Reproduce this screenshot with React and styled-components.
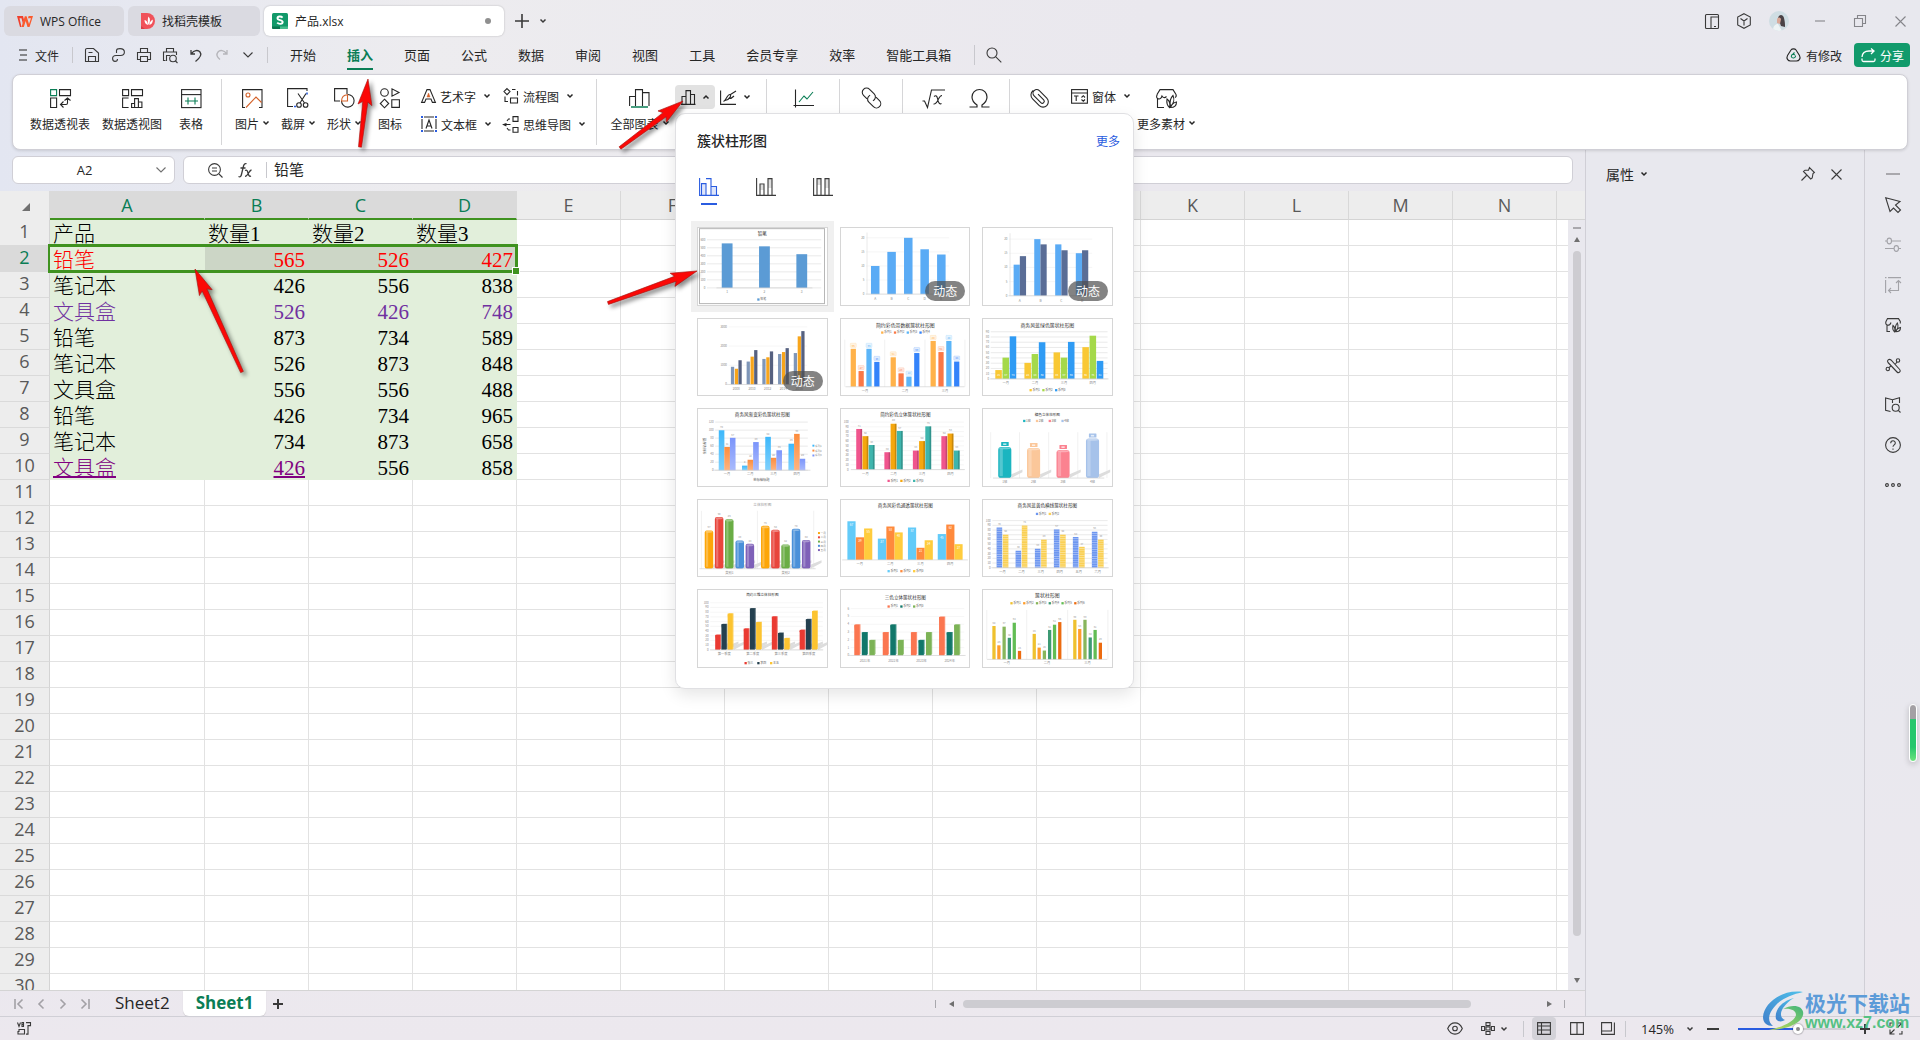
import React, { useState } from "react";
import styled, { createGlobalStyle, css } from "styled-components";

const SANS = `"Open Sans", "Noto Sans CJK SC", sans-serif`;
const CJK = `"Noto Sans CJK SC", sans-serif`;
const SONG = `"Liberation Serif", "Noto Sans CJK SC", serif`;
const GREEN = "#0a7d55";
const LINE = "#d0cfd6";

const GlobalStyle = createGlobalStyle`
  * { box-sizing: border-box; }
  html, body { margin: 0; padding: 0; }
  body { font-family: ${CJK}; font-size: 12px; color: #262626; overflow: hidden; }
  button, input { font: inherit; color: inherit; }
  button { background: none; border: 0; padding: 0; margin: 0; }
`;

/* ---------- icons ---------- */

const Svg = styled.svg`
  display: block;
  flex: none;
  fill: none;
  stroke: currentColor;
  stroke-width: 1.1;
  overflow: visible;
`;

const O = "#d4622a";
const B = "#2a5ce0";

const ICONS = {
  wps: [16, 13, <g stroke="none"><path fill="#f0402c" d="M0 1h6l1 4-1 4L4.500 3.200H2.500L4.500 12H3L0 1z" /><path fill="#fb5a2d" d="M4.500 12 7.800 1.200h1.800L12 9l2-5.800h-3L11.600 1H16l-3.500 11h-2L8.700 6 6.800 12z" /></g>],
  docer: [14, 16, <g stroke="none"><path fill="#f0525a" d="M0 0h6a8 8 0 0 1 8 8 8 8 0 0 1-8 8H0z" /><path fill="#d93c45" d="M0 13l4 3H0z" /><path fill="#fff" d="M7.500 3.500c2 2 2 5 0 8.500-1-3-1-6 0-8.500zM3.500 7c2 .5 3.300 2 3.500 5-2.500-.5-3.500-2.500-3.500-5zM11.800 6.500c.2 3-1 5-3.500 5.500.2-2.500 1.500-4.500 3.500-5.500z" /></g>],
  sheet: [16, 16, <g stroke="none"><rect width="16" height="16" rx="1.500" fill="#12996a" /><path fill="#0b7650" d="M0 13.500h8V16H1.500A1.500 1.500 0 0 1 0 14.500z" /><path fill="#46bd8d" d="M8 13.500h8v1a1.500 1.500 0 0 1-1.500 1.500H8z" /><path stroke="#fff" strokeWidth="1.900" fill="none" d="M10.600 4.600C9 3 5.500 3.200 5.500 5.200c0 2.400 5.200 1.400 5.200 3.900 0 2.200-3.900 2.300-5.500.6" /></g>],
  plus: [14, 14, <path strokeWidth="1.600" d="M7 0v14M0 7h14" />],
  plusSmall: [10, 10, <path strokeWidth="2" d="M5 0v10M0 5h10" />],
  chev: [6, 4, <path strokeWidth="1.500" d="M.5.5 3 3 5.500.5" />],
  chevUp: [6, 4, <path strokeWidth="1.500" d="M.5 3.500 3 1l2.500 2.500" />],
  chevWide: [10, 6, <path d="M.5.500 5 5 9.500.5" />],
  burger: [8, 12, <path d="M0 1h8M1 6h7M0 11h8" />],
  save: [14, 14, <path d="M13.500 13.500H.5V2A1.500 1.500 0 0 1 2 .5h6.500l5 4.500v8.500zM3.500 13.500V8.500h7v5M3.500 4.500h4" />],
  link: [13, 14, <path d="M4.500 5V2.500C4.500 1.200 6 .6 8 .6c3 0 4.400 1.300 4.400 3.500S11 7.500 8.500 7.500H4C1.800 7.500.6 8.800.6 10.500s1 2.900 2.400 2.900S5.500 12.500 5.500 11" />],
  print: [14, 14, <path d="M3.500 4.500v-4h7v4M3.500 11.500h-3v-7h13v7h-3M3.500 8.500h7v5h-7z" />],
  preview: [15, 15, <><path d="M3.500 4V.5h7V4M2.500 12.500h-2V4h13v3M3.500 13V7.500H7" /><circle cx="10" cy="10.500" r="3.300" /><path d="m12.500 13 2 2" /></>],
  undo: [12, 13, <path strokeWidth="1.300" d="M1 1v4h4M1.500 4.500C4 1.200 8 .5 10 3s.5 5.500-4.500 9.500" />],
  redo: [12, 13, <path strokeWidth="1.300" d="M11 1v4H7M10.500 4.500C8 1.200 4 .5 2 3s-.5 5.500 2 7.500" />],
  search: [16, 16, <><circle cx="6" cy="6" r="5" /><path d="m9.800 9.800 5.500 5.500" /></>],
  cloud: [15, 14, <><path d="M5 2C6 .5 9 .5 10 2l3.500 5.500c1.500 3-.5 5.500-3 5.500h-6C2 13 0 10.500 1.500 7.500z" /><path stroke={GREEN} d="M8.500 4.500 7 6l2 1M9.500 7.500c.5 3-4 3.300-4.200.8 0-1.300.8-2 2-2.200" /></>],
  share: [15, 14, <path strokeWidth="1.300" d="M1 9c.3-3.800 3-6 7-6h5M10 .5 13 3l-3 3M1 10.500v1.500c0 1 .5 1.500 1.500 1.500h10c1 0 1.500-.5 1.500-1.500v-1.500" />],
  panes: [14, 15, <><rect x=".5" y=".5" width="13" height="14" rx="1" /><path d="M6 14.500V3h7.500M9 12.500h2" /></>],
  cube: [14, 16, <path d="M7 .7 13.300 4v8L7 15.300.7 12V4zM3.500 5.500 7 8l3.500-2.500M7 8v4.500" />],
  min: [10, 2, <path d="M0 1h10" />],
  restore: [12, 12, <path d="M.5 3.500h8v8h-8zM3.500 3.500v-3h8v8h-3" />],
  close: [11, 11, <path d="m.5.500 10 10M10.500.5l-10 10" />],
  pivot: [21, 19, <><path stroke={GREEN} d="M.6.6h6v6h-6z" /><path d="M9.500.6h11v6h-11zM.6 9h6v9.500h-6zM17.500 9.500V14c0 1-.5 1.500-1.500 1.500h-5.500M14.500 11.500l3-2.500 3 2.500M13.500 12.500l-3 3 3 3" /></>],
  pivotChart: [21, 19, <path d="M.6.600h6v6h-6zM9.500.6h11v6h-11zM6.600 18.500h-6V9h6M9 18.500h11.500M9.600 18.500v-4h3v4M12.600 18.500V9.600h3.800v8.900M16.400 18.500v-5.500h3.500v5.500" />],
  table: [21, 19, <><rect x=".6" y=".6" width="19.400" height="18" /><path d="M.6 5.600H20" /><path stroke={GREEN} d="M4 12h13M7 8.500v7M14 8.500v7" /></>],
  picture: [21, 19, <><path d="M3 18.500H.6V.6H20v17.900h-3" /><circle cx="6" cy="6" r="2" stroke={O} /><path stroke={O} d="M4 18.500 14 8l5.500 5.500" /></>],
  shot: [22, 20, <><path d="M6 18.500H.6V.6H20V3" /><path stroke={B} strokeWidth="1.600" d="M7 18.500h2M20 4.500v2" /><path d="m11 5.500 6.500 9.500M19 5.500 13 15" /><circle cx="12" cy="17" r="2.300" /><circle cx="18.600" cy="17" r="2.300" /></>],
  shape: [21, 20, <><path d="M6 13H.6V.6H13V6" /><path d="M13.500 6.500a6.300 6.300 0 1 1-6 6.500" /><path stroke={O} d="M7.500 13c.2-3.500 2.500-6 6-6.200V13z" /></>],
  icons: [20, 20, <><circle cx="4.500" cy="4.500" r="3.800" /><path d="M12 .8v7.400l7-3.700zM4.500 11.200 8.700 15.500 4.500 19.800.3 15.500zM11.800 11.800h7.600v7.600h-7.600z" /></>],
  wordArt: [15, 14, <><path d="M6 .6h3L14.400 13.400h-3L10 10H5l-1.400 3.400h-3z" /><path fill={O} stroke={O} strokeWidth=".5" d="M7.500 4 9 8H6z" /></>],
  textBox: [16, 16, <><path d="M3 1h10M3 15h10M1 3v10M15 3v10M5 12.500 8 4l3 8.500M6 10h4" /><g fill={B} stroke="none"><path d="M0 0h2v2H0zM14 0h2v2h-2zM0 14h2v2H0zM14 14h2v2h-2z" /></g></>],
  flow: [16, 16, <path d="M4 .6 7 3.600 4 6.600 1 3.600zM2 8.500v5h3M9 1.500h3.500M14.500 3v4.500M7.500 10h7v5h-7z" />],
  mind: [16, 17, <path d="M10 .6h5v4.800h-5zM10 11.500h5v4.800h-5zM7 3H5.500L4 5M3.500 7.500l-3 1 3 1.500M.5 8.500h7M4 12l1.500 2H7.500" />],
  bars: [21, 19, <><path d="M.6 17V7.500h5.500M6.500 17V.6h7V17M13.500 3.600H20V17" /><path stroke={GREEN} strokeWidth="1.500" d="M2 18h17" /></>],
  barsSmall: [15, 15, <path d="M0 14.400h14.500M1 14V6.500h4M5 14V.6h4.500V14M9.500 4.500h4V14" />],
  scatter: [17, 15, <path d="M.6.500v13.900H16M3.500 11.500C6 10.500 7 4.500 10 4.500c1.500 0 .5 5-5 6M9 8.500c2 .5 3.500-1 5-2.500M10.500 4.500 16 1" />],
  spark: [21, 19, <><path d="M2.500.500v18M.5 16.500H21" /><path stroke={GREEN} d="m6 13 5-6 3 3 6-7" /></>],
  chain: [21, 20, <g transform="rotate(45 10.500 10)"><path d="M8 13.800H3a4.300 4.300 0 0 1 0-8.600h6.500a4.300 4.300 0 0 1 4 5.800" /><path d="M13 6.200h5a4.300 4.300 0 0 1 0 8.600h-6.500a4.300 4.300 0 0 1-4-5.800" /></g>],
  sqrt: [23, 19, <path d="M.5 12h2l3 6.500L9.500 1H23M12 7.500c2-1.500 3-.5 3.500 2s1.500 6.500 4 5M20 6.500c-2 0-2.500 1.500-4 4.500s-2.500 4.500-4.500 4" />],
  omega: [21, 19, <path strokeWidth="1.200" d="M.5 18H8v-2C5 14 3 11.500 3 8a7.500 7.500 0 0 1 15 0c0 3.500-2 6-5 8v2h7.500" />],
  clip: [20, 19, <g transform="rotate(45 10 9.500)"><path d="M-.5 8.500V9a5.500 5.500 0 0 0 5.500 6h9.500a5.300 5.300 0 0 0 0-10.600H4a3.600 3.600 0 0 0 0 7.400h9.500a2 2 0 0 0 0-4H5.500" /></g>],
  form: [17, 15, <><rect x=".6" y=".6" width="15.800" height="13.600" /><path d="M.6 4h15.800M3 7h4.500M5.200 7v5M10.500 8.500 12.300 6.700l1.700 1.800M10.500 10.500l1.800 1.700 1.700-1.700" /></>],
  more: [21, 19, <path d="M8 18.500H1.500V9.500C0 8.500.6 6 1.600 5.500M1.600 9.500c2.500 1.500 4-1 4.400-2.500 1 1.500 2.500 2.500 4.500.5M1 5.500 4 .6h13l3 4.900c.4 1 0 2.500-1 3M13.500 18.500C10.500 16 10.500 13 11 10c2.500 2 3.500 5 2.500 8.500zM14.500 17C13.500 13 14.500 9 17 6.500c1.500 3.500 1 8-2.500 10.500zM14.500 18.500c1-3 3-5 6-5.500 0 3.500-2.500 5.500-6 5.500z" />],
  material: [16, 15, <path d="M5 13.500H2V7C.5 6.500.6 4.500 1 3.500L2.500.6h11L15.300 3.500v2M2 7c2 .5 3.500-.5 4-2.500M9.500 13.800C7.500 12 7.500 9.500 8 7.500c1.800 1.500 2.300 4 1.500 6.300zM10.500 13C10 10 10.500 7 12.300 5c1.200 2.500.7 6-1.800 8zM10.800 13.800c.7-2.300 2.200-3.800 4.700-4.300 0 2.600-1.800 4.300-4.700 4.300z" />],
  zoomOut: [15, 15, <><circle cx="6.500" cy="6.500" r="5.900" /><path d="m11 11 3.500 3.500M4 5h5M4 8h5" /></>],
  fx: [14, 15, <path strokeWidth="1.300" d="M.5 13.500c2 1 2.700-.5 3.200-3L5.500 3c.5-2 1.500-2.800 3-2.300M2.500 5h5M7 7.500c2-1 2.500.5 3 2.500s1.300 4 3 3M13.500 7c-2.500 0-3.500 6.500-6.500 6.300" />],
  pin: [14, 14, <path d="M8.500.6 13.400 5.500 12 6.500l-.8 4.500-1.500 1L2.500 4.500 4 3.300l3.500-.2zM5.500 8.500.5 13.500" />],
  cursor: [16, 16, <path d="M.7.7 15 4.500 10.500 8l5 5-2.500 2.500-4.500-4.500L5 14.500z" />],
  tune: [16, 14, <><path d="M0 3h2M6.500 3H16M0 10.500h9M13.500 10.500H16" /><ellipse cx="4.300" cy="3" rx="2.200" ry="2.900" /><ellipse cx="11.300" cy="10.500" rx="2.200" ry="2.900" /></>],
  resize: [16, 16, <path d="M0 .6h1.500M3 .6h13M.6 3v13M13.500 4v9.500H4M11 6l2.500-2.500L16 6M6 11l-2.500 2.500L6 16" />],
  tools: [16, 15, <><path d="M3 4.500 12 14a1.800 1.800 0 0 0 2.700-2.500L6 2C4 .5 1.500 2.500 3 4.500zM10.500 6l1.500-2M4 9.500 6 8" /><circle cx="13" cy="2.500" r="1.700" /><circle cx="2.800" cy="11" r="1.700" /></>],
  book: [16, 16, <><path d="M5.500 14.500.6 13.300V1l6.900 1.800L14.500.700V6M7.500 2.800V6" /><circle cx="10.700" cy="10.700" r="3.500" /><path d="m13.300 13.300 2.200 2.200" /></>],
  help: [16, 16, <><circle cx="8" cy="8" r="7.400" /><path d="M5.700 6.200C5.800 3 10.300 3 10.300 6c0 1.800-2.300 1.900-2.300 3.800M8 11.500v1.300" /></>],
  dots: [16, 4, <><circle cx="2" cy="2" r="1.400" /><circle cx="8" cy="2" r="1.400" /><circle cx="14" cy="2" r="1.400" /></>],
  first: [10, 10, <path strokeWidth="1.600" d="M1 0v10M8.500.500 4 5l4.500 4.500" />],
  last: [10, 10, <path strokeWidth="1.600" d="M9 0v10M1.500.500 6 5 1.500 9.500" />],
  prev: [6, 10, <path strokeWidth="1.600" d="M5.500.500 1 5l4.500 4.500" />],
  next: [6, 10, <path strokeWidth="1.600" d="M.5.500 5 5 .5 9.500" />],
  macro: [14, 13, <path d="M.5.500 2 4.500 3.500.5M5 .5h1.500v4H5zM5 2.500h1.500M9 .6h4.500v3H11v8.500H9M2 7.500h5.500v4.500H1V9.500h1z" />],
  eye: [16, 13, <><path d="M.7 6.500C4-1 12-1 15.300 6.500 12 14 4 14 .7 6.500z" /><circle cx="8" cy="6.500" r="2.300" /></>],
  cross: [14, 13, <path d="M5 .6h4v3H5zM5 9.500h4v3H5zM.6 4.500h3v4h-3zM10.400 4.500h3v4h-3zM5 5h4v3H5z" />],
  gridView: [14, 13, <path d="M.6.600h12.800v11.800H.6zM.6 4h12.800M.6 8h12.800M4.500.6v11.800" />],
  columns: [14, 13, <path d="M.6.600h12.800v11.800H.6zM7 .6v11.800" />],
  page: [14, 13, <path d="M.6.600h9.900v8.400H.6zM13.400.6v11.800H.6V9" />],
  minus: [12, 2, <path strokeWidth="2" d="M0 1h12" />],
  full: [14, 13, <path d="M8.500 1H13v4.500M13 1 8.500 5.500M5.500 12H1V7.500M1 12l4.500-4.500M1 4V1h3M13 9v3h-3" />],
  cluster: [20, 18, <><path fill="#dfe6fb" d="M2 6h5v11H2zM12.500 9H18v8h-5.500z" stroke="none" /><path d="M.6 0v17.400H20M2.500 17V5.600H7V17M7 .6h5V17M12.500 8.500h5V17" /></>],
  stacked: [20, 18, <><path fill="#dedede" stroke="none" d="M4 7h4v5H4zM12 1h4v9h-4z" /><path d="M.6 0v17.400H20M4 17V6h4v11M12 17V.6h4V17" /></>],
  percent: [20, 18, <><path fill="#dedede" stroke="none" d="M4 1h4v6H4zM12 1h4v9h-4z" /><path d="M.6 0v17.400H20M4 17V.6h4V17M12 17V.6h4V17" /></>],
};

const Icon = ({ name }) => {
  const [w, h, body] = ICONS[name];
  return (
    <Svg width={w} height={h} viewBox={`0 0 ${w} ${h}`} aria-hidden="true">
      {body}
    </Svg>
  );
};

/* ---------- frame ---------- */

const Frame = styled.div`
  position: relative;
  display: flex;
  flex-direction: column;
  height: 100vh;
  overflow: hidden;
  background:
    linear-gradient(180deg, rgba(236, 232, 238, 0) 60%, #ece8ee 100%),
    linear-gradient(90deg, #e3e6f1 0, #edecef 22%, #eae8ee 60%, #e8e8ee 100%);
`;

const Row = styled.div`
  display: flex;
  align-items: center;
`;

const TitleBar = styled(Row)`
  height: 40px;
  padding: 6px 0 4px 4px;
  gap: 4px;
`;

const FileTab = styled.button`
  display: flex;
  align-items: center;
  gap: 7px;
  width: ${(p) => p.$w}px;
  height: 30px;
  padding: 0 13px;
  border-radius: 6px;
  font-family: ${SANS};
  background: ${(p) => (p.$active ? "#fff" : "#dadae1")};
  box-shadow: ${(p) => (p.$active ? "0 0 2px rgba(0,0,0,.25)" : "none")};
  &[aria-selected="true"] { padding-left: 8px; }
`;

const Dot = styled.span`
  width: 6px;
  height: 6px;
  margin-left: auto;
  border-radius: 50%;
  background: #8f8f8f;
`;

const IconButton = styled.button`
  display: flex;
  align-items: center;
  justify-content: center;
  gap: 6px;
  width: ${(p) => p.$w || 26}px;
  height: ${(p) => p.$h || 24}px;
  border-radius: 4px;
  color: ${(p) => p.$c || "#3a3a3a"};
  background: ${(p) => (p.$on ? "#d3d2d8" : "none")};
`;

const Push = styled(Row)`
  margin-left: auto;
`;

const Avatar = styled.span`
  width: 20px;
  height: 20px;
  margin: 0 11px 0 9px;
  border-radius: 50%;
  overflow: hidden;
  background: #cfdde3;
`;

const MenuBar = styled(Row)`
  height: 34px;
  padding: 0 10px 4px 19px;
`;

const FileMenu = styled.button`
  display: flex;
  align-items: center;
  gap: 8px;
  margin-right: 13px;
`;

const QuickTools = styled(Row)`
  padding: 0 6px;
`;

const VLine = styled.span`
  flex: none;
  width: 1px;
  height: ${(p) => p.$h || 16}px;
  margin: 0 ${(p) => p.$m || 0}px;
  background: ${(p) => p.$c || "#c8c8cd"};
`;

const Gap = styled.span`
  flex: none;
  width: ${(p) => p.$w || 8}px;
  height: ${(p) => p.$h || 1}px;
`;

const MenuTabs = styled.nav`
  display: flex;
  gap: 31px;
  margin: 0 23px 0 22px;
`;

const MenuTab = styled.button`
  height: 28px;
  margin-top: 2px;
  padding-bottom: 2px;
  font-size: 13px;
  white-space: nowrap;
  border-bottom: 2px solid transparent;
  ${(p) => p.$active && css`color: ${GREEN}; font-weight: 700; border-color: ${GREEN};`}
`;

const ShareButton = styled.button`
  display: flex;
  align-items: center;
  gap: 4px;
  height: 24px;
  margin-left: 12px;
  padding: 0 6px 0 7px;
  border-radius: 4px;
  color: #fff;
  background: #119a6b;
`;

/* ---------- ribbon ---------- */

const Ribbon = styled.div`
  position: relative;
  z-index: 2;
  display: flex;
  align-items: flex-start;
  height: 76px;
  margin: 0 12px;
  padding: 4px 11px;
  border: 1px solid ${LINE};
  border-radius: 8px;
  background: #fff;
  box-shadow: 0 1px 3px rgba(0, 0, 0, 0.12);
`;

const BigTool = styled.button`
  display: flex;
  flex-direction: column;
  align-items: center;
  flex: none;
  width: ${(p) => p.$w}px;
  padding-top: 9px;
`;

const BigIcon = styled.span`
  display: flex;
  align-items: center;
  height: 20px;
`;

const ToolLabel = styled.span`
  display: flex;
  align-items: center;
  gap: 4px;
  height: 20px;
  margin-top: 5px;
  white-space: nowrap;
`;

const ToolStack = styled.div`
  display: flex;
  flex-direction: column;
  gap: 4px;
  width: ${(p) => p.$w}px;
  margin-left: ${(p) => p.$ml || 0}px;
  padding-top: ${(p) => (p.$ml ? 5 : 6)}px;
`;

const SmallTool = styled.button`
  display: flex;
  align-items: center;
  height: 24px;
  gap: 4px;
  white-space: nowrap;
  & > span { margin-right: 4px; }
`;

const PopAnchor = styled.div`
  position: relative;
  padding-top: 6px;
`;

const DropButton = styled.button`
  display: flex;
  align-items: center;
  justify-content: center;
  gap: 7px;
  width: 40px;
  height: 24px;
  border-radius: 4px;
  background: ${(p) => (p.$on ? "#e2e2e2" : "none")};
`;

const Pop = styled.section`
  position: absolute;
  left: 0;
  top: 34px;
  width: 459px;
  padding: 15px 20px 20px 21px;
  border: 1px solid #e0e0e3;
  border-radius: 10px;
  background: #fff;
  box-shadow: 0 6px 16px rgba(0, 0, 0, 0.1);
`;

const PopHead = styled.header`
  display: flex;
  align-items: center;
  justify-content: space-between;
  height: 22px;
`;

const PopTitle = styled.h2`
  margin: 0;
  font-size: 14px;
  font-weight: 500;
`;

const MoreLink = styled.a`
  margin-right: -7px;
  color: #2a5ce0;
  text-decoration: none;
`;

const Kinds = styled.div`
  display: flex;
  gap: 37px;
  margin: 27px 0 22px 2px;
`;

const Kind = styled.button`
  display: flex;
  flex-direction: column;
  align-items: center;
  gap: 7px;
  width: 20px;
  color: ${(p) => (p.$on ? "#2a5ce0" : "#3a3a3a")};
  &::after {
    content: "";
    width: 16px;
    height: 2px;
    background: ${(p) => (p.$on ? "#2a5ce0" : "transparent")};
  }
`;

const Thumbs = styled.div`
  display: grid;
  grid-template-columns: repeat(3, 1fr);
  grid-template-rows: repeat(5, minmax(0, 1fr));
  gap: 12px;
  height: 441px;
`;

const Thumb = styled.button`
  position: relative;
  border: 1px solid #d6d6d6;
  background: #fff;
  box-shadow: ${(p) => (p.$on ? "0 0 0 6px #f0f0f0" : "none")};
  & > svg { display: block; width: 100%; height: 100%; }
`;

const Badge = styled.span`
  position: absolute;
  right: 4px;
  bottom: 4px;
  width: 40px;
  border-radius: 10px;
  line-height: 20px;
  color: #fff;
  background: rgba(78, 78, 78, 0.7);
`;

/* ---------- thumbnails ---------- */

const MONTHS = ["一月", "二月", "三月", "四月", "五月", "六月"];
const series = (n) => Array.from({ length: n }, (_, i) => `系列${i + 1}`);
const steps = (max, by) => Array.from({ length: max / by + 1 }, (_, i) => max - i * by);

const CHARTS = [
  { view: [52, 52], title: "铅笔", ts: 14, ty: 67, starts: [123, 237, 351], off: [0], w: 33, base: 235, tops: [[99], [108], [132]], colors: ["#5b9bd5"], yl: steps(600, 100), gy: 88, gx: [78, 427], xl: ["1", "2", "3"], xy: 246, legend: ["铅笔"], ly: 270, frame: true },
  { view: [481, 52], live: true, starts: [571, 621, 672, 722, 773], off: [0], w: 26, base: 254, tops: [[168], [125], [82], [117], [133]], colors: ["#5aabf5"], yl: steps(20, 5), gy: 82, gx: [556, 810], faint: true, axis: 66, xl: [..."ABCDE"], xy: 267 },
  { view: [908, 52], live: true, starts: [1000, 1063, 1127, 1190], off: [0, 19], w: 19, base: 259, tops: [[164, 138], [86, 102], [102, 120], [129, 120]], colors: ["#5aabf5", "#5a6d96"], yl: steps(20, 5), gy: 86, gx: [986, 1240], faint: true, axis: 68, xl: [..."ABCD"], xy: 272 },
  { view: [52, 325], live: true, starts: [151, 199, 247, 295, 343], off: [0, 12, 23], w: 10, base: 525, tops: [[471, 477, 451], [455, 440, 420], [447, 442, 424], [432, 426, 414], [429, 378, 362]], colors: ["#7f96b8", "#f8a51b", "#566180"], yl: steps(3000, 1000), gy: 349, gx: [144, 384], faint: true, xl: ["2008", "2010", "2012", "2014", "2016"], xy: 538 },
  { view: [481, 325], title: "简约彩色带数据簇状柱形图", ts: 15, ty: 341, starts: [509, 631, 753], off: [0, 24, 48, 72], w: 16, base: 532, tops: [[416, 484, 416, 456], [442, 491, 501, 429], [392, 426, 392, 455]], colors: ["#ffb24a", "#fa7846", "#5bb5f8", "#3483fa"], vals: true, boxed: true, dividers: [491, 613, 736, 858], dy: 388, xl: MONTHS, xy: 543, legend: series(4), ly: 366 },
  { view: [908, 325], title: "商务风蓝绿色簇状柱形图", ts: 15, ty: 341, starts: [944, 1033, 1122, 1210], off: [0, 22, 44], w: 20, base: 508, tops: [[481, 443, 378], [459, 432, 396], [427, 443, 395], [411, 376, 453]], colors: ["#f9c834", "#a5d94a", "#2f9bf4"], inner: 496, yl: steps(90, 10), gy: 364, gx: [930, 1287], xl: MONTHS, xy: 520, legend: series(3), ly: 542 },
  { view: [52, 25], title: "商务风渐变彩色簇状柱形图", ts: 14, ty: 41, starts: [114, 185, 256, 327], off: [0, 17, 34], w: 17, base: 212, tops: [[90, 141, 113], [198, 180, 126], [110, 174, 151], [131, 101, 177]], colors: ["#3db8fb", "#fd8c3c", "#7b95fb"], soft: true, vals: true, yl: steps(120, 20), gy: 65, gx: [103, 386], xl: MONTHS, xy: 223, side: ["系列1", "系列2", "系列3"], sx: 400, sy: 137, sp: 15, caption: ["坐标轴标题", 244, 240], vcaption: ["坐标轴标题", 71, 138] },
  { view: [481, 25], title: "简约彩色立体簇状柱形图", ts: 14, ty: 41, starts: [526, 612, 699, 786], off: [0, 19, 38], w: 18, base: 210, tops: [[86, 108, 135], [157, 70, 92], [152, 123, 78], [108, 100, 152]], colors: ["#f0558d", "#f5a70e", "#3eb5ad"], shade: true, vals: true, yl: steps(100, 10), gy: 65, gx: [508, 855], faint: true, xl: MONTHS, xy: 222, legend: series(3), ly: 244 },
  { view: [908, 25], title: "糖色立体柱形图", ts: 11, ty: 41, starts: [953, 1041, 1131, 1221], off: [0], w: 40, base: 236, tops: [[141], [144], [150], [115]], colors: ["#1bb5c0", "#fbc79a", "#fb8290", "#a6c2ea"], bottle: true, shadow: true, dividers: [930, 1018, 1107, 1196, 1285], dy: 96, xl: ["1班", "2班", "3班", "4班"], xy: 246, legend: ["1班", "2班", "3班", "4班"], ly: 61 },
  { view: [52, 298], title: "立体柱形图", ts: 11, ty: 313, tc: "#999", starts: [71, 243], off: [0, 31, 62, 94, 125], w: 26, base: 508, tops: [[391, 350, 357, 422, 432], [377, 389, 434, 386, 420]], colors: ["#fda608", "#e8453c", "#6aad45", "#4a90d9", "#7e60b8"], round: true, shadow: true, vals: true, dividers: [61, 232, 404], dy: 331, xl: ["类别1", "类别2"], xy: 520, side: ["一月", "二月", "三月", "四月", "五月"], sx: 417, sy: 399, sp: 13 },
  { view: [481, 298], title: "商务风彩色通透簇状柱形图", ts: 14, ty: 314, starts: [499, 592, 684, 775], off: [0, 26, 51], w: 25, base: 481, tops: [[363, 412, 385], [416, 379, 397], [382, 444, 421], [402, 373, 433]], colors: ["#63cbf9", "#ff8a3c", "#ffcc3d"], innerTop: true, xl: MONTHS, xy: 492, legend: series(3), ly: 515 },
  { view: [908, 298], title: "商务风蓝黄色横线簇状柱形图", ts: 14, ty: 314, starts: [948, 1006, 1065, 1123, 1181, 1239], off: [0, 19], w: 17, base: 505, tops: [[382, 404], [453, 376], [447, 419], [388, 404], [411, 441], [395, 419]], colors: ["#6d96f0", "#fad054"], stripes: true, vals: true, yl: steps(100, 10), gy: 361, gx: [935, 1287], xl: MONTHS, xy: 517, legend: series(2), ly: 340 },
  { view: [52, 569], title: "简约三维立体柱形图", ts: 11, ty: 583, starts: [103, 190, 276, 361], off: [0, 19, 38], w: 18, base: 752, tops: [[706, 673, 641], [687, 625, 667], [650, 700, 716], [691, 658, 633]], colors: ["#ea3a32", "#24404f", "#fcc431"], cap: true, shadow: true, yl: steps(100, 10), gy: 608, gx: [88, 432], faint: true, xl: ["第一季度", "第二季度", "第三季度", "第四季度"], xy: 764, legend: ["张三", "李四", "王五"], ly: 792 },
  { view: [481, 569], title: "三色立体簇状柱形图", ts: 14, ty: 591, starts: [520, 607, 693, 779], off: [0, 23, 46], w: 19, base: 769, tops: [[675, 698, 722], [698, 675, 722], [698, 722, 698], [651, 698, 675]], colors: ["#fb7650", "#11776a", "#7cb356"], cap: true, yl: steps(6, 1), gy: 626, gx: [509, 856], faint: true, xl: ["2021年", "2022年", "2023年", "2024年"], xy: 785, legend: series(3), ly: 619 },
  { view: [908, 569], title: "簇状柱形图", ts: 15, ty: 584, starts: [935, 1058, 1182], off: [0, 15, 31, 47, 62, 78], w: 10, base: 781, tops: [[679, 738, 681, 715, 669, 755], [703, 745, 754, 691, 675, 667], [660, 688, 660, 714, 691, 730]], colors: ["#efc12e", "#ff9d2b", "#88b65c", "#3d9a73", "#62bd54", "#ec6b10"], vals: true, dividers: [918, 1040, 1165, 1288], dy: 630, xl: MONTHS, xy: 791, legend: series(6), ly: 609 },
];

const Tiny = styled.text`
  font-family: ${CJK};
  font-size: ${(p) => p.$s || 9}px;
  fill: ${(p) => p.$c || "#8a8a8a"};
  stroke: none;
  text-anchor: ${(p) => p.$a || "middle"};
  dominant-baseline: central;
`;

const Bar = ({ c, x, y, color }) => {
  const h = c.base - y;
  const val = Math.round(h / 1.75);
  return (
    <g>
      {c.shadow && <path d={`M${x + c.w} ${c.base}l34 -18v-8l-34 14z`} fill="#ddd" />}
      {c.bottle && (
        <>
          <rect x={x + 9} y={y - 15} width="23" height="12" rx="1" fill={color} />
          <rect x={x + 15} y={y - 11} width="10" height="5" fill="#fff" opacity=".7" />
        </>
      )}
      {c.cap && <path d={`M${x} ${y + 4}l4 -5h${c.w - 4}v${h - 4}l-4 5z`} fill={color} opacity=".75" />}
      <rect x={x} y={y} width={c.cap ? c.w - 3 : c.w} height={h} rx={c.bottle ? 9 : c.round ? 6 : 0} fill={color} />
      {c.soft && <rect x={x} y={y} width={c.w} height={h} fill="url(#fadeDown)" />}
      {c.shade && <rect x={x + c.w - 5} y={y} width="5" height={h} fill="#000" opacity=".18" />}
      {(c.round || c.bottle) && (
        <>
          <rect x={x + 4} y={y + 6} width={c.w / 4} height={h - 12} fill="#fff" opacity=".25" />
          <ellipse cx={x + c.w / 2} cy={y + 4} rx={c.w / 2 - 2} ry="3" fill="#fff" opacity=".35" />
        </>
      )}
      {c.stripes && <path d={`M${x + c.w / 2} ${y + 4}V${c.base}`} stroke="#fff" strokeOpacity=".45" strokeWidth={c.w} strokeDasharray="2 5" />}
      {c.boxed && <rect x={x - 1} y={y - 17} width={c.w + 2} height="13" rx="2" fill={color} fillOpacity=".15" stroke={color} strokeOpacity=".5" />}
      {c.vals && <Tiny x={x + c.w / 2} y={y - 10} $c={c.boxed ? color : "#999"} $s={8}>{val}</Tiny>}
      {c.inner && <Tiny x={x + c.w / 2} y={c.inner} $c="#fff" $s={8}>{val}</Tiny>}
      {c.innerTop && <Tiny x={x + c.w / 2} y={y + 11} $c="#fff" $s={9}>{val}</Tiny>}
    </g>
  );
};

const Chart = ({ c }) => {
  const [ox, oy] = c.view;
  const mid = ox + 195;
  const span = c.off[c.off.length - 1] + c.w;
  const lw = 39;
  return (
    <svg viewBox={`${ox} ${oy} 390 234`} aria-hidden="true">
      {c.soft && (
        <linearGradient id="fadeDown" x1="0" y1="0" x2="0" y2="1">
          <stop offset="0" stopColor="#fff" stopOpacity="0" />
          <stop offset="1" stopColor="#fff" stopOpacity=".35" />
        </linearGradient>
      )}
      {c.frame && <rect x="55" y="54" width="382" height="229" fill="none" stroke="#b5b5b5" strokeWidth="3" />}
      {c.title && <Tiny x={mid} y={c.ty} $s={c.ts} $c={c.tc || "#333"}>{c.title}</Tiny>}
      {c.yl && c.yl.map((v, i) => {
        const y = c.gy + ((c.base - c.gy) * i) / (c.yl.length - 1);
        return (
          <g key={v}>
            <path d={`M${c.gx[0]} ${y}H${c.gx[1]}`} stroke={c.faint ? "#f1f1f1" : "#dedede"} strokeWidth="2" />
            <Tiny x={c.gx[0] - 5} y={y} $a="end">{v}</Tiny>
          </g>
        );
      })}
      {c.axis && <path d={`M${c.gx[0] + 3} ${c.axis}V${c.base}`} stroke="#ddd" strokeWidth="2" />}
      {c.dividers && c.dividers.map((x) => <path key={x} d={`M${x} ${c.dy}V${c.base}`} stroke="#e9e9e9" strokeWidth="2" />)}
      {c.tops.map((group, g) =>
        group.map((y, i) => (
          <Bar key={`${g}-${i}`} c={c} x={c.starts[g] + c.off[i]} y={y} color={c.bottle ? c.colors[g] : c.colors[i]} />
        ))
      )}
      <path d={`M${c.starts[0] - 16} ${c.base}H${c.starts[c.starts.length - 1] + span + 16}`} stroke="#cfcfcf" strokeWidth="2" />
      {c.starts.map((x, i) => <Tiny key={x} x={x + span / 2} y={c.xy} $s={10}>{c.xl[i]}</Tiny>)}
      {c.legend && c.legend.map((t, i) => {
        const x = mid + (i - c.legend.length / 2) * lw + 4;
        return (
          <g key={t}>
            <rect x={x} y={c.ly - 3} width="7" height="7" fill={c.colors[i]} />
            <Tiny x={x + 9} y={c.ly} $a="start" $c="#666">{t}</Tiny>
          </g>
        );
      })}
      {c.side && c.side.map((t, i) => (
        <g key={t}>
          <rect x={c.sx} y={c.sy + i * c.sp - 3} width="6" height="6" fill={c.colors[i]} />
          <Tiny x={c.sx + 8} y={c.sy + i * c.sp} $a="start" $s={8}>{t}</Tiny>
        </g>
      ))}
      {c.caption && <Tiny x={c.caption[1]} y={c.caption[2]} $s={10} $c="#555">{c.caption[0]}</Tiny>}
      {c.vcaption && (
        <g transform={`rotate(-90 ${c.vcaption[1]} ${c.vcaption[2]})`}>
          <Tiny x={c.vcaption[1]} y={c.vcaption[2]} $s={10} $c="#555">{c.vcaption[0]}</Tiny>
        </g>
      )}
    </svg>
  );
};

/* ---------- sheet ---------- */

const Body = styled.div`
  display: flex;
  flex: 1;
  min-height: 0;
`;

const Main = styled.main`
  display: flex;
  flex-direction: column;
  flex: 1;
  min-width: 0;
`;

const FormulaRow = styled(Row)`
  gap: 8px;
  height: 41px;
  padding: 6px 12px 7px;
`;

const Field = styled(Row)`
  height: 28px;
  border: 1px solid ${LINE};
  border-radius: 6px;
  background: #fff;
  ${(p) => (p.$w ? css`width: ${p.$w}px;` : css`flex: 1; padding-left: 15px;`)}
  input {
    flex: 1;
    min-width: 0;
    height: 26px;
    border: 0;
    outline: 0;
    background: none;
  }
`;

const NameInput = styled.input`
  padding: 0 0 0 8px;
  text-align: center;
  font-family: ${SANS};
  font-size: 13px;
`;

const FormulaInput = styled.input`
  padding: 0 0 4px;
  font-size: 15px;
`;

const SheetArea = styled.div`
  display: flex;
  flex: 1;
  min-height: 0;
  background: #ededed;
`;

const Viewport = styled.div`
  position: relative;
  flex: 1;
  min-width: 0;
  overflow: hidden;
`;

const Table = styled.table`
  width: 1661px;
  table-layout: fixed;
  border-collapse: separate;
  border-spacing: 0;
  background: #fff;
`;

const Col = styled.col`
  width: ${(p) => p.$w}px;
`;

const ColHead = styled.th`
  height: 29px;
  padding: 0;
  font: 400 18px/26px ${SANS};
  color: ${(p) => (p.$on ? GREEN : "#595959")};
  background: ${(p) => (p.$on ? "#dadada" : "#ededed")};
  border-right: 1px solid ${(p) => (p.$on ? "#dadada" : "#d8d8d8")};
  border-bottom: ${(p) => (p.$on ? "2px solid #3f921f" : "1px solid #d4d4d4")};
`;

const RowHead = styled.th`
  height: 26px;
  padding: 0 0 2px;
  font: 400 18px/23px ${SANS};
  color: ${(p) => (p.$on ? GREEN : "#595959")};
  background: ${(p) => (p.$on ? "#dadada" : "#ededed")};
  border-right: 1px solid #d4d4d4;
  border-bottom: 1px solid #dadada;
`;

const Corner = styled.td`
  padding: 0;
  background: #ededed;
  border-right: 1px solid #dadada;
`;

const Cell = styled.td`
  height: 26px;
  padding: 3px 3px 0;
  font: 300 21px/22px ${SONG};
  white-space: nowrap;
  text-align: ${(p) => (p.$num ? "right" : "left")};
  color: ${(p) => p.$c || "#000"};
  background: ${(p) => (p.$sel ? "#ccd6c6" : p.$fill ? "#e2efdb" : "#fff")};
  border-right: 1px solid ${(p) => (p.$sel ? "#ccd6c6" : p.$fill ? "#e2efdb" : "#e2e2e2")};
  border-bottom: 1px solid ${(p) => (p.$sel ? "#ccd6c6" : p.$fill ? "#e2efdb" : "#e2e2e2")};
  text-decoration: ${(p) => (p.$u ? "underline 2px" : "none")};
`;

const Selection = styled.div`
  position: absolute;
  left: 48px;
  top: 53px;
  width: 470px;
  height: 29px;
  border: 3px solid #3f921f;
  border-left-width: 2px;
  pointer-events: none;
  &::after {
    content: "";
    position: absolute;
    right: -5px;
    bottom: -5px;
    width: 6px;
    height: 6px;
    border: 1px solid #fff;
    background: #3f921f;
    box-sizing: content-box;
  }
`;

const VScroll = styled.div`
  display: flex;
  flex-direction: column;
  align-items: center;
  width: 17px;
  margin-top: 28px;
  padding: 7px 0;
  border-top: 1px solid #d4d4d4;
  background: #e9e8ee;
`;

const Dash = styled.span`
  flex: none;
  width: ${(p) => p.$w}px;
  height: 2px;
  background: #a9a8ad;
`;

const Tri = styled.span`
  flex: none;
  width: 0;
  height: 0;
  border: 3px solid transparent;
  ${(p) => p.$d === "up" && css`border-bottom: 5px solid #707070; border-top: 0; margin: 8px 0 9px;`}
  ${(p) => p.$d === "down" && css`border-top: 5px solid #707070; border-bottom: 0; margin: 42px 0 0;`}
  ${(p) => p.$d === "left" && css`border-right: 5px solid #707070; border-left: 0; margin: 0 9px 0 13px;`}
  ${(p) => p.$d === "right" && css`border-left: 5px solid #707070; border-right: 0; margin: 0 12px 0 76px;`}
`;

const ScrollThumb = styled.span`
  flex: 1;
  border-radius: 4px;
  background: #cdccd1;
  ${(p) => (p.$h ? css`height: 8px;` : css`width: 8px;`)}
`;

const SheetBar = styled(Row)`
  height: 26px;
  padding: 0 20px 0 7px;
  border-top: 1px solid #d4d4d4;
  font-family: ${SANS};
`;

const SheetTab = styled.button`
  height: 25px;
  padding: 0 13px 3px;
  border-radius: 0 0 6px 6px;
  font-size: 17px;
  ${(p) => p.$on && css`color: ${GREEN}; font-weight: 700; background: #fff; box-shadow: 0 1px 1px rgba(0,0,0,.12);`}
`;

const HScroll = styled(Row)`
  width: 630px;
  margin-left: auto;
`;

const Panel = styled.aside`
  width: 279px;
  border-left: 1px solid ${LINE};
  background: rgba(232, 232, 238, 0.6);
`;

const PanelHead = styled(Row)`
  gap: 7px;
  height: 24px;
  margin: 12px 14px 0 20px;
  font-size: 14px;
`;

const Rail = styled.aside`
  display: flex;
  flex-direction: column;
  align-items: center;
  width: 56px;
  padding-top: 23px;
  border-left: 1px solid ${LINE};
`;

const RailButton = styled.button`
  display: flex;
  align-items: center;
  justify-content: center;
  width: 32px;
  height: 40px;
  color: ${(p) => (p.$off ? "#a3a3a8" : "#3a3a3a")};
`;

const StatusBar = styled(Row)`
  height: 24px;
  padding-left: 11px;
  border-top: 1px solid ${LINE};
`;

const Zoom = styled.output`
  width: 46px;
  font-family: ${SANS};
  font-size: 13px;
`;

const Range = styled.input`
  appearance: none;
  width: 108px;
  height: 12px;
  margin: 0 12px;
  background: linear-gradient(90deg, #2a5ce0 0 56%, #cfced4 56%) center / 100% 2px no-repeat;
  &::-webkit-slider-thumb {
    appearance: none;
    width: 10px;
    height: 10px;
    border: 3px solid #fff;
    border-radius: 50%;
    background: #8a8a8a;
    box-shadow: 0 0 1px 1px rgba(0, 0, 0, 0.2);
  }
`;

/* ---------- overlays ---------- */

const Marks = styled.svg`
  position: absolute;
  inset: 0;
  z-index: 5;
  width: 100%;
  height: 100%;
  pointer-events: none;
  filter: drop-shadow(3px 3px 2px rgba(0, 0, 0, 0.45));
`;

const Arrow = ({ from, to }) => {
  const dx = from[0] - to[0];
  const dy = from[1] - to[1];
  const len = Math.hypot(dx, dy);
  const angle = (Math.atan2(dy, dx) * 180) / Math.PI;
  return (
    <path
      transform={`translate(${to[0]} ${to[1]}) rotate(${angle})`}
      d={`M0 0 26-7 23-2.600 ${len}-1.500V1.500L23 2.600 26 7z`}
      fill="#fb0806"
      stroke="#a81512"
      strokeWidth=".6"
    />
  );
};

const Handle = styled.span`
  position: absolute;
  right: 3px;
  top: 704px;
  z-index: 3;
  width: 8px;
  height: 58px;
  border: 1px solid #fff;
  border-radius: 4px;
  background: linear-gradient(180deg, #a3a0a4 0 25%, #25c76c 26% 75%, #6ae27c 100%);
  box-shadow: 0 2px 6px rgba(0, 0, 0, 0.2);
`;

const Watermark = styled.div`
  position: absolute;
  right: 10px;
  bottom: 8px;
  z-index: 6;
  display: flex;
  align-items: center;
  gap: 1px;
  pointer-events: none;
`;

const MarkText = styled.div`
  display: flex;
  flex-direction: column;
  font: 700 21px/24px ${CJK};
  color: #5c9bd8;
  span:last-child {
    font: 700 16px/18px "Liberation Sans", sans-serif;
    color: #55c183;
  }
`;

/* ---------- data ---------- */

const LETTERS = [..."ABCDEFGHIJKLMN", ""];
const DATA = [
  ["产品", "数量1", "数量2", "数量3"],
  ["铅笔", 565, 526, 427],
  ["笔记本", 426, 556, 838],
  ["文具盒", 526, 426, 748],
  ["铅笔", 873, 734, 589],
  ["笔记本", 526, 873, 848],
  ["文具盒", 556, 556, 488],
  ["铅笔", 426, 734, 965],
  ["笔记本", 734, 873, 658],
  ["文具盒", 426, 556, 858],
];
const MENU = ["开始", "插入", "页面", "公式", "数据", "审阅", "视图", "工具", "会员专享", "效率", "智能工具箱"];
const QUICK = ["save", "link", "print", "preview", "undo", "redo", "chevWide"];
const RAIL = ["cursor", "tune", "resize", "material", "tools", "book", "help", "dots"];

const cellColor = (r, c) => {
  if (r === 1) return "#f00";
  if (r === 3) return "#7030a0";
  if (r === 9 && c < 2) return "#800080";
  return undefined;
};

const Tool = ({ w, icon, label, drop }) => (
  <BigTool $w={w} aria-label={label || icon}>
    <BigIcon><Icon name={icon} /></BigIcon>
    {label && <ToolLabel>{label}{drop && <Icon name="chev" />}</ToolLabel>}
  </BigTool>
);

const Small = ({ icon, label }) => (
  <SmallTool><Icon name={icon} /><span>{label}</span><Icon name="chev" /></SmallTool>
);

const Rule = () => <VLine $h={66} $m={7} $c="#d6d6d8" />;

export default function App() {
  const [zoom, setZoom] = useState(145);
  return (
    <Frame>
      <GlobalStyle />
      <TitleBar>
        <FileTab $w={120}><Icon name="wps" />WPS Office</FileTab>
        <FileTab $w={132}><Icon name="docer" />找稻壳模板</FileTab>
        <FileTab $w={240} $active aria-selected="true" role="tab"><Icon name="sheet" />产品.xlsx<Dot /></FileTab>
        <IconButton $w={28} aria-label="新建"><Icon name="plus" /></IconButton>
        <IconButton $w={6} aria-label="标签列表"><Icon name="chev" /></IconButton>
        <Push>
          <IconButton $w={32} aria-label="窗格"><Icon name="panes" /></IconButton>
          <IconButton $w={32} aria-label="应用"><Icon name="cube" /></IconButton>
          <Avatar>
            <svg width="20" height="20" viewBox="0 0 20 20" aria-hidden="true">
              <path fill="#4a4246" d="M9 7c1-4 5-4 6 0s1 6 1 9l-4-1z" />
              <path fill="#d9a898" d="M8 8c1-2 3-2 4 0l-1 5-3-1z" />
              <path fill="#eef4f5" d="M4 20c0-5 2-7 5-7l4 7z" />
            </svg>
          </Avatar>
          <IconButton $w={40} $c="#85858a" aria-label="最小化"><Icon name="min" /></IconButton>
          <IconButton $w={40} $c="#85858a" aria-label="还原"><Icon name="restore" /></IconButton>
          <IconButton $w={40} $c="#85858a" aria-label="关闭"><Icon name="close" /></IconButton>
        </Push>
      </TitleBar>

      <MenuBar>
        <FileMenu><Icon name="burger" />文件</FileMenu>
        <VLine />
        <QuickTools>
          {QUICK.map((n) => (
            <IconButton key={n} $c={n === "redo" ? "#b5b5ba" : "#3a3a3a"} aria-label={n}><Icon name={n} /></IconButton>
          ))}
        </QuickTools>
        <VLine />
        <MenuTabs>
          {MENU.map((m) => <MenuTab key={m} $active={m === "插入"}>{m}</MenuTab>)}
        </MenuTabs>
        <VLine $h={20} />
        <IconButton $w={38} aria-label="搜索"><Icon name="search" /></IconButton>
        <Push>
          <Icon name="cloud" />
          <Gap $w={5} />
          有修改
          <ShareButton><Icon name="share" />分享</ShareButton>
        </Push>
      </MenuBar>

      <Ribbon>
        <Tool w={72} icon="pivot" label="数据透视表" />
        <Tool w={72} icon="pivotChart" label="数据透视图" />
        <Tool w={46} icon="table" label="表格" />
        <Rule />
        <Tool w={46} icon="picture" label="图片" drop />
        <Tool w={46} icon="shot" label="截屏" drop />
        <Tool w={46} icon="shape" label="形状" drop />
        <Tool w={46} icon="icons" label="图标" />
        <ToolStack $w={81} $ml={8}>
          <Small icon="wordArt" label="艺术字" />
          <Small icon="textBox" label="文本框" />
        </ToolStack>
        <ToolStack $w={86} $ml={1}>
          <Small icon="flow" label="流程图" />
          <Small icon="mind" label="思维导图" />
        </ToolStack>
        <Rule />
        <Tool w={71} icon="bars" label="全部图表" drop />
        <PopAnchor>
          <DropButton $on aria-label="柱形图" aria-expanded="true"><Icon name="barsSmall" /><Icon name="chevUp" /></DropButton>
          <Pop>
            <PopHead>
              <PopTitle>簇状柱形图</PopTitle>
              <MoreLink href="#more">更多</MoreLink>
            </PopHead>
            <Kinds>
              <Kind $on aria-label="簇状"><Icon name="cluster" /></Kind>
              <Kind aria-label="堆积"><Icon name="stacked" /></Kind>
              <Kind aria-label="百分比堆积"><Icon name="percent" /></Kind>
            </Kinds>
            <Thumbs>
              {CHARTS.map((c, i) => (
                <Thumb key={i} $on={i === 0} aria-label={c.title || "动态图表"}>
                  <Chart c={c} />
                  {c.live && <Badge>动态</Badge>}
                </Thumb>
              ))}
            </Thumbs>
          </Pop>
        </PopAnchor>
        <ToolStack $w={44}>
          <DropButton aria-label="散点图"><Icon name="scatter" /><Icon name="chev" /></DropButton>
        </ToolStack>
        <Rule />
        <Tool w={58} icon="spark" />
        <Rule />
        <Tool w={48} icon="chain" />
        <Rule />
        <Tool w={46} icon="sqrt" />
        <Tool w={46} icon="omega" />
        <Rule />
        <Tool w={46} icon="clip" />
        <ToolStack $w={66} $ml={8}>
          <Small icon="form" label="窗体" />
        </ToolStack>
        <Tool w={58} icon="more" label="更多素材" drop />
      </Ribbon>

      <Body>
        <Main>
          <FormulaRow>
            <Field $w={163}>
              <NameInput defaultValue="A2" aria-label="名称框" />
              <IconButton $c="#707070" aria-label="展开"><Icon name="chevWide" /></IconButton>
            </Field>
            <Field>
              <IconButton $w={32} aria-label="浏览公式"><Icon name="zoomOut" /></IconButton>
              <IconButton $w={28} aria-label="插入函数"><Icon name="fx" /></IconButton>
              <VLine $m={7} />
              <FormulaInput defaultValue="铅笔" aria-label="编辑栏" />
            </Field>
          </FormulaRow>

          <SheetArea>
            <Viewport>
              <Table>
                <colgroup>
                  <Col $w={50} />
                  {LETTERS.map((l) => <Col key={l} $w={l === "A" ? 155 : 104} />)}
                </colgroup>
                <thead>
                  <tr>
                    <Corner>
                      <Svg width="49" height="20" viewBox="0 0 49 20"><path stroke="none" fill="#707070" d="M30 7v8h-8z" /></Svg>
                    </Corner>
                    {LETTERS.map((l, i) => <ColHead key={l} scope="col" $on={i < 4}>{l}</ColHead>)}
                  </tr>
                </thead>
                <tbody>
                  {Array.from({ length: 30 }, (_, r) => (
                    <tr key={r}>
                      <RowHead scope="row" $on={r === 1}>{r + 1}</RowHead>
                      {LETTERS.map((l, c) => {
                        const v = DATA[r]?.[c];
                        return (
                          <Cell
                            key={l}
                            $num={typeof v === "number"}
                            $fill={r < 10 && c < 4}
                            $sel={r === 1 && c > 0 && c < 4}
                            $c={cellColor(r, c)}
                            $u={r === 9 && c < 2}
                          >
                            {v}
                          </Cell>
                        );
                      })}
                    </tr>
                  ))}
                </tbody>
              </Table>
              <Selection />
            </Viewport>
            <VScroll>
              <Dash $w={8} />
              <Tri $d="up" />
              <ScrollThumb />
              <Tri $d="down" />
            </VScroll>
          </SheetArea>

          <SheetBar>
            <IconButton $w={24} $c="#a3a1a6" aria-label="第一张"><Icon name="first" /></IconButton>
            <IconButton $w={20} $c="#a3a1a6" aria-label="上一张"><Icon name="prev" /></IconButton>
            <IconButton $w={24} $c="#a3a1a6" aria-label="下一张"><Icon name="next" /></IconButton>
            <IconButton $w={20} $c="#a3a1a6" aria-label="最后一张"><Icon name="last" /></IconButton>
            <Gap $w={7} />
            <SheetTab>Sheet2</SheetTab>
            <SheetTab $on>Sheet1</SheetTab>
            <IconButton $w={24} aria-label="新建工作表"><Icon name="plusSmall" /></IconButton>
            <HScroll>
              <VLine $h={8} $c="#a9a8ad" />
              <Tri $d="left" />
              <ScrollThumb $h />
              <Tri $d="right" />
              <VLine $h={8} $c="#a9a8ad" />
            </HScroll>
          </SheetBar>
        </Main>

        <Panel>
          <PanelHead>
            属性<Icon name="chev" />
            <Push>
              <IconButton $w={28} aria-label="固定"><Icon name="pin" /></IconButton>
              <IconButton $w={28} aria-label="关闭面板"><Icon name="close" /></IconButton>
            </Push>
          </PanelHead>
        </Panel>
        <Rail>
          <Dash $w={14} />
          <Gap $h={10} />
          {RAIL.map((n) => (
            <RailButton key={n} aria-label={n} $off={n === "tune" || n === "resize"}><Icon name={n} /></RailButton>
          ))}
        </Rail>
      </Body>

      <StatusBar>
        <IconButton aria-label="宏"><Icon name="macro" /></IconButton>
        <Push>
          <IconButton $w={34} aria-label="护眼模式"><Icon name="eye" /></IconButton>
          <IconButton $w={43} aria-label="阅读模式"><Icon name="cross" /><Icon name="chev" /></IconButton>
          <VLine $m={8} />
          <IconButton $w={24} $h={23} $on aria-label="普通视图"><Icon name="gridView" /></IconButton>
          <Gap $w={7} />
          <IconButton $w={28} aria-label="分页预览"><Icon name="columns" /></IconButton>
          <IconButton $w={34} aria-label="页面布局"><Icon name="page" /></IconButton>
          <VLine />
          <Gap $w={15} />
          <Zoom>{zoom}%</Zoom>
          <IconButton $w={6} aria-label="缩放比例"><Icon name="chev" /></IconButton>
          <Gap $w={7} />
          <IconButton aria-label="缩小"><Icon name="minus" /></IconButton>
          <Range type="range" min="10" max="251" value={zoom} onChange={(e) => setZoom(+e.target.value)} aria-label="缩放" />
          <IconButton $w={14} aria-label="放大"><Icon name="plusSmall" /></IconButton>
          <IconButton $w={48} aria-label="全屏"><Icon name="full" /></IconButton>
        </Push>
      </StatusBar>

      <Handle />
      <Watermark>
        <svg width="42" height="40" viewBox="0 0 42 40" aria-hidden="true">
          <defs>
            <linearGradient id="wmBlue" x1="1" y1="0" x2="0" y2="1">
              <stop offset="0" stopColor="#4fc0ea" />
              <stop offset="1" stopColor="#3f7fcb" />
            </linearGradient>
            <linearGradient id="wmGreen" x1="1" y1="0" x2="0" y2="1">
              <stop offset="0" stopColor="#3fb57c" />
              <stop offset="1" stopColor="#c5dc58" />
            </linearGradient>
          </defs>
          <path fill="url(#wmBlue)" d="M41 1C20-2 2 12 1 26c0 6 4 9 10 9-5-4-5-10-1-16C16 9 28 4 41 1z" />
          <path fill="url(#wmBlue)" d="M32 7C20 10 12 19 14 28c2 3 6 3 9 1-5-2-5-7-2-12 3-4 7-8 11-10z" />
          <path fill="url(#wmGreen)" d="M21 18c10-6 22-3 20 6-2 9-18 15-34 15 14-3 26-9 27-15 0-5-6-7-13-6z" />
        </svg>
        <MarkText><span>极光下载站</span><span>www.xz7.com</span></MarkText>
      </Watermark>

      <Marks aria-hidden="true">
        <Arrow from={[360, 147]} to={[368, 79]} />
        <Arrow from={[620, 148]} to={[683, 101]} />
        <Arrow from={[608, 303]} to={[697, 271]} />
        <Arrow from={[242, 372]} to={[195, 269]} />
      </Marks>
    </Frame>
  );
}
